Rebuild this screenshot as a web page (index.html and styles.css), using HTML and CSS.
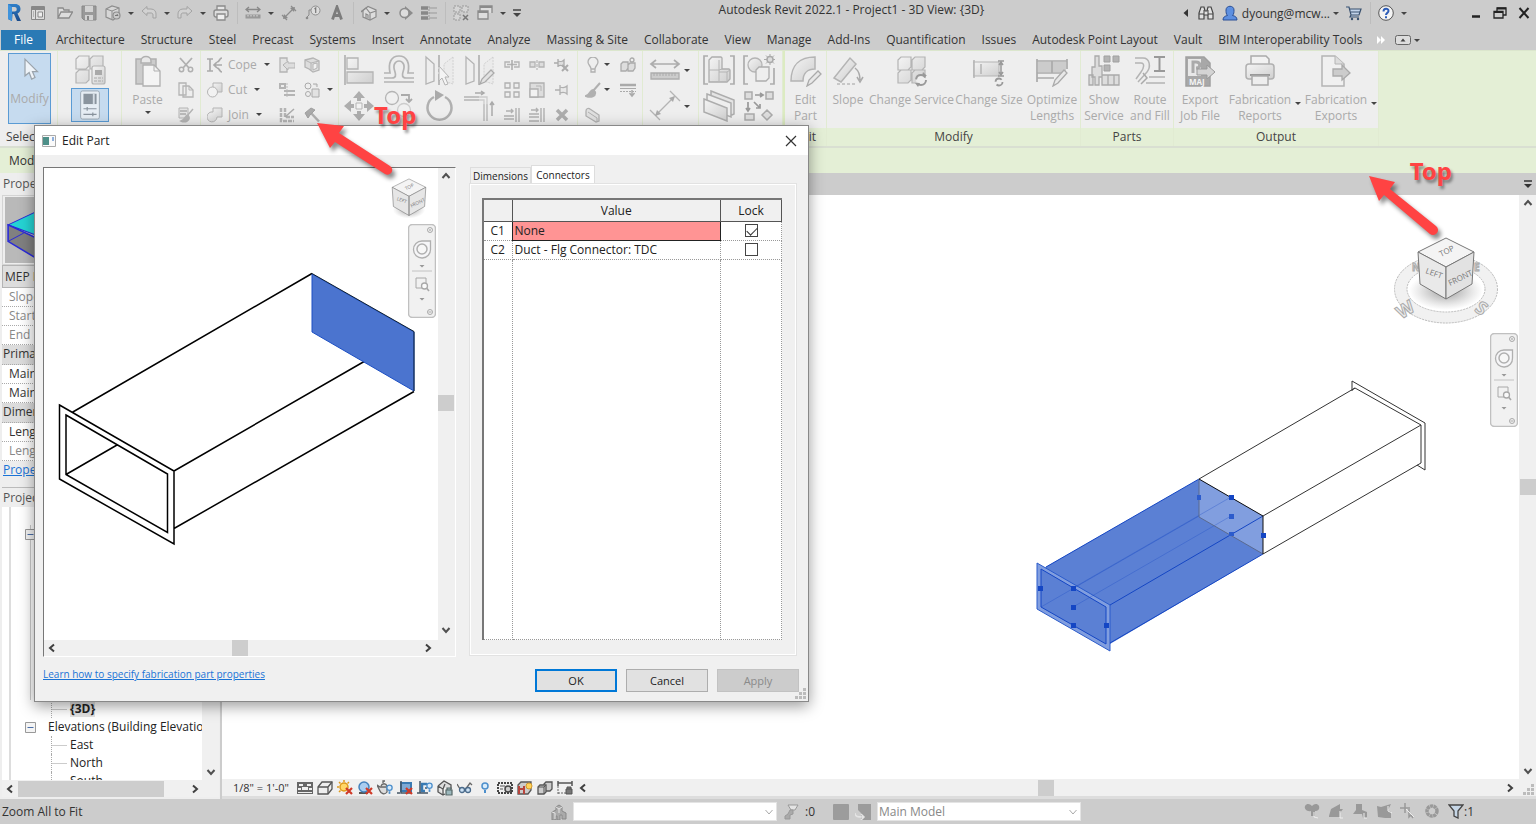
FILE: index.html
```html
<!DOCTYPE html>
<html lang="en">
<head>
    <meta charset="UTF-8">
    <title>Autodesk Revit 2022.1 - Project1 - 3D View: {3D}</title>
    <link rel="stylesheet" href="styles.css">
</head>
<body>
<svg class="defs" aria-hidden="true">
    <defs>
        <linearGradient id="grey" x1="0" y1="0" x2="1" y2="1"><stop offset="0" stop-color="#f4f4f4"/><stop offset="1" stop-color="#cfcfcf"/></linearGradient>
        <linearGradient id="logo" x1="0" y1="0" x2="0" y2="1"><stop offset="0" stop-color="#2f7fc9"/><stop offset="1" stop-color="#1a4a8a"/></linearGradient>
        <radialGradient id="cubeShadow"><stop offset="0" stop-color="#555" stop-opacity=".6"/><stop offset="1" stop-color="#888" stop-opacity="0"/></radialGradient>
        <symbol id="up" viewBox="0 0 16 16"><path d="M4.500 10 8 6l3.500 4" fill="none" stroke="#505050" stroke-width="2"/></symbol>
        <symbol id="down" viewBox="0 0 16 16"><path d="M4.500 6 8 10l3.500-4" fill="none" stroke="#505050" stroke-width="2"/></symbol>
        <symbol id="left" viewBox="0 0 16 16"><path d="M10 4.500 6 8l4 3.500" fill="none" stroke="#404040" stroke-width="2"/></symbol>
        <symbol id="right" viewBox="0 0 16 16"><path d="M6 4.500 10 8l-4 3.500" fill="none" stroke="#404040" stroke-width="2"/></symbol>
        <symbol id="grip" viewBox="0 0 12 12"><path d="M8 0h3v3H8zM4 4h3v3H4zM8 4h3v3H8zM0 8h3v3H0zM4 8h3v3H4zM8 8h3v3H8z" fill="#bcbcbc"/></symbol>
        <symbol id="redx" viewBox="0 0 8 8"><path d="M1 1l6 6M7 1 1 7" stroke="#cf3a28" stroke-width="2.200"/></symbol>
        <symbol id="bulb" viewBox="0 0 8 12"><circle cx="4" cy="4" r="3" fill="#d9ecfb" stroke="#4d8fcc" stroke-width="1.500"/><path d="M3 8v3h2V8" fill="#4d8fcc"/></symbol>
        <symbol id="navbar" viewBox="0 0 28 94">
            <rect x=".5" y=".5" width="27" height="93" rx="4" fill="#f1f1f1" stroke="#c0c0c0" stroke-width="1.500"/>
            <circle cx="22" cy="6" r="2.500" fill="none" stroke="#aaa"/><path d="M20.500 4.500l3 3M23.500 4.500l-3 3" stroke="#aaa" stroke-width=".6"/>
            <path d="M14 17h8.500v8a8.500 8.500 0 1 1-8.500-8z" fill="#f6f6f8" stroke="#b0b0b0" stroke-width="1.300"/><circle cx="14" cy="25" r="5" fill="#f7f7f7" stroke="#b0b0b0" stroke-width="1.500"/>
            <path d="M11.500 41h5L14 43.500zM11.500 74h5L14 76.500z" fill="#999"/><path d="M4 47h20" stroke="#c2c2c2"/>
            <path d="M14 64H8V54h10v6" fill="none" stroke="#a8a8a8"/><circle cx="16.500" cy="62" r="3" fill="#fafafa" stroke="#a8a8a8" stroke-width="1.300"/><path d="M18.500 64l2.500 3" stroke="#a8a8a8" stroke-width="1.600"/>
            <circle cx="22" cy="88" r="2.500" fill="none" stroke="#aaa"/><path d="M20.500 88h3" stroke="#aaa"/>
        </symbol>
    </defs>
</svg>

<div class="app">
    <header class="titlebar">
        <div class="qat">
            <button title="Revit"><svg viewBox="0 0 16 20" class="logo"><path fill="url(#logo)" fill-rule="evenodd" d="M2 1h7c4 0 5.500 2.500 5.500 5 0 2.300-1.200 3.800-3 4.600L15 18h-4l-3-7H6.500l-.5 7L2 16zM6 4v4.500h2.500c1.500 0 2.200-1 2.200-2.300S10 4 8.500 4z"/><path d="M2 1v15l4 2V4z" fill="#3f93dc"/></svg></button>
            <button class="qat-ui" title="User interface"><svg viewBox="0 0 16 16"><path d="M1.500 1.500h13v13h-13z" fill="#ddd" stroke="#888"/><path d="M2 3.500h12" stroke="#888" stroke-width="3"/><path d="M5.500 5v9M8 7h4.500v5H8z" fill="#eee" stroke="#888"/><path d="M3 7h1M3 9h1M3 11h1" stroke="#888"/></svg></button>
            <button title="Open"><svg viewBox="0 0 16 16"><path d="M1 13V3h5l1 2h5v2M1 13l3-6h11.500L12 13z" fill="#ddd" stroke="#8b8b8b" stroke-width="1.300"/></svg></button>
            <button title="Save"><svg viewBox="0 0 16 16"><path d="M1 1h14v14H3l-2-2z" fill="#999" stroke="#888"/><path d="M4 1h8v6H4zM4 10h8v5H4z" fill="#d2d2d2"/><path d="M6 11v4h2v-4z" fill="#888"/></svg></button>
            <button title="Synchronize"><svg viewBox="0 0 16 16"><path d="M1 4l6-3 7 2v8l-6 4-7-3z" fill="#d6d6d6" stroke="#8e8e8e" stroke-width="1.200"/><path d="M1 4l6 2 7-3M7 6v8" fill="none" stroke="#8e8e8e"/><circle cx="11.500" cy="10.500" r="3.500" fill="#c9c9c9" stroke="#8e8e8e" stroke-width="1.200"/><path d="M10 10.500h3l-1.200-1.500" fill="none" stroke="#777"/></svg></button>
            <i class="caret"></i>
            <button title="Undo"><svg viewBox="0 0 16 16"><path d="M1 6l5-4.500V4h4c3.500 0 5 2.500 5 5v4h-3v-3c0-1.500-1-2-2-2H6v2.500z" fill="#d2d2d2" stroke="#a3a3a3"/></svg></button>
            <i class="caret"></i>
            <button title="Redo"><svg viewBox="0 0 16 16"><path d="M15 6l-5-4.500V4H6C2.500 4 1 6.500 1 9v4h3v-3c0-1.500 1-2 2-2h4v2.500z" fill="#d2d2d2" stroke="#a3a3a3"/></svg></button>
            <i class="caret"></i>
            <button title="Print"><svg viewBox="0 0 16 16"><path d="M4 5V1h8v4" fill="#e6e6e6" stroke="#8b8b8b" stroke-width="1.300"/><rect x="1" y="5" width="14" height="7" rx="2" fill="#ddd" stroke="#8b8b8b" stroke-width="1.400"/><path d="M4 9h8v6H4z" fill="#eee" stroke="#8b8b8b" stroke-width="1.300"/></svg></button>
            <i class="sep"></i>
            <button title="Measure"><svg viewBox="0 0 16 16"><path d="M1 4.500h14M4 2L1 4.500 4 7M12 2l3 2.500L12 7" fill="none" stroke="#888" stroke-width="1.300"/><path d="M.5 9.500h15v4H.5z" fill="#999"/><path d="M3 10v1.500M6 10v1.500M9 10v1.500M12 10v1.500" stroke="#ddd"/></svg></button>
            <i class="caret"></i>
            <button title="Aligned dimension"><svg viewBox="0 0 16 16"><path d="M3 13L13 3M1 10l5 5M10 1l5 5" fill="none" stroke="#8b8b8b" stroke-width="1.200"/><path d="M2 14l1-5 4 4zM14 2l-1 5-4-4z" fill="#8b8b8b"/></svg></button>
            <button title="Tag"><svg viewBox="0 0 16 16"><path d="M1 13l3-3V5h4" fill="none" stroke="#8b8b8b"/><circle cx="2" cy="13" r="1.300" fill="#8b8b8b"/><circle cx="10.500" cy="5.500" r="4.500" fill="#ddd" stroke="#909090"/><path d="M9.500 4l1.200-1v5" fill="none" stroke="#777" stroke-width="1.200"/></svg></button>
            <button title="Text"><svg viewBox="0 0 16 16"><path d="M3.500 14.500L8 2l4.500 12.500M5 10.500h6" fill="none" stroke="#7c7c7c" stroke-width="2.800"/></svg></button>
            <i class="sep"></i>
            <button title="Default 3D view"><svg viewBox="0 0 16 16"><path d="M1 6l6-4.500L15 5v7l-6 3-7-3V6z" fill="#ddd" stroke="#8b8b8b" stroke-width="1.200"/><path d="M0 7l5-4 4 5 6-2M9 8v7M5 13V9l2 1v3.500" fill="none" stroke="#8b8b8b" stroke-width="1.200"/></svg></button>
            <i class="caret"></i>
            <button title="Section"><svg viewBox="0 0 16 16"><path d="M8 1l8 7-8 7z" fill="#8c8c8c"/><circle cx="7.500" cy="8" r="4.500" fill="#ddd" stroke="#8c8c8c" stroke-width="1.500"/></svg></button>
            <button title="Thin lines"><svg viewBox="0 0 16 16"><path d="M0 3h7M0 8h7M0 13h7" stroke="#888" stroke-width="3.500"/><path d="M8 3h8M8 8h8M8 13h8" stroke="#999"/><path d="M8 1v14" stroke="#999" stroke-dasharray="2 1"/></svg></button>
            <i class="sep"></i>
            <button title="Close inactive views"><svg viewBox="0 0 16 16"><path d="M1 1h6v6H1zM9 1h6v6H9zM1 9h6v6H1z" fill="#d5d5d5" stroke="#999" stroke-dasharray="2 1"/><path d="M10 10l5 5M15 10l-5 5" stroke="#777" stroke-width="1.500"/></svg></button>
            <button title="Switch windows"><svg viewBox="0 0 16 16"><path d="M3 7V1h12v7M1 6h10v8H1z" fill="#ddd" stroke="#8a8a8a" stroke-width="1.300"/><path d="M3 2h12M1 7h10" stroke="#8a8a8a" stroke-width="2"/></svg></button>
            <i class="caret"></i>
            <button class="qat-more" title="Customize"><svg viewBox="0 0 16 16"><path d="M4 5h8" stroke="#444" stroke-width="1.500"/><path d="M4 8h8l-4 4z" fill="#444"/></svg></button>
        </div>
        <div class="title">Autodesk Revit 2022.1 - Project1 - 3D View: {3D}</div>
        <div class="account">
            <button class="narrow" title="Collapse"><svg viewBox="0 0 16 16"><path d="M10 4v8L5.500 8z" fill="#333"/></svg></button>
            <button title="Search"><svg viewBox="0 0 16 16"><path d="M1 14V8l2-6h3l1 4h2l1-4h3l2 6v6h-5v-4H6v4z" fill="#e2e2e2" stroke="#444" stroke-width="1.200"/><path d="M1 9h5M10 9h5M6 5v5M10 5v5" stroke="#444"/></svg></button>
            <button title="Account"><svg viewBox="0 0 16 16"><path d="M1 15c0-3 2-4 4.500-4.500C4 9 4 7 4 5c0-5 8-5 8 0 0 2 0 4-1.500 5.500C13 11 15 12 15 15z" fill="#5d8fe0" stroke="#2a4f96"/></svg></button>
            <span class="user">dyoung@mcw...</span><i class="caret"></i>
            <button title="App store"><svg viewBox="0 0 16 16"><path d="M0 2h3l2 8h8l2-6H4M5 10l-1 2h9" fill="#c2d4ea" stroke="#38506e" stroke-width="1.200"/><path d="M5 7h9" stroke="#38506e"/><circle cx="6" cy="14" r="1.200" fill="#38506e"/><circle cx="12" cy="14" r="1.200" fill="#38506e"/></svg></button>
            <i class="sep"></i>
            <button title="Help"><svg viewBox="0 0 16 16"><circle cx="8" cy="8" r="7.300" fill="#f4f4f4" stroke="#555"/><path d="M5.500 6.500c0-3.500 5-3.500 5-.5 0 1.800-2.500 2-2.500 4M8 11.200v2" fill="none" stroke="#2c5cb8" stroke-width="2"/></svg></button>
            <i class="caret"></i>
            <button class="minimize" title="Minimize"><svg viewBox="0 0 16 16"><path d="M4 11.500h8" stroke="#222" stroke-width="2.500"/></svg></button>
            <button title="Restore"><svg viewBox="0 0 16 16"><path d="M5 6V3h9v7h-3M2 6.500h9V13H2z" fill="none" stroke="#222" stroke-width="1.300"/><path d="M5 3.500h9M2 7h9" stroke="#222" stroke-width="2"/></svg></button>
            <button title="Close"><svg viewBox="0 0 16 16"><path d="M3.500 3l9 10M12.500 3l-9 10" stroke="#222" stroke-width="2"/></svg></button>
        </div>
    </header>

    <nav class="tabs">
        <a class="file" href="#">File</a>
        <a href="#">Architecture</a><a href="#">Structure</a><a href="#">Steel</a><a href="#">Precast</a><a href="#">Systems</a><a href="#">Insert</a><a href="#">Annotate</a><a href="#">Analyze</a><a href="#">Massing &amp; Site</a><a href="#">Collaborate</a><a href="#">View</a><a href="#">Manage</a><a href="#">Add-Ins</a><a href="#">Quantification</a><a href="#">Issues</a><a href="#">Autodesk Point Layout</a><a href="#">Vault</a><a href="#">BIM Interoperability Tools</a>
        <svg class="tabs-more" viewBox="0 0 10 10"><path d="M1 1l4 4-4 4zM5 1l4 4-4 4z" fill="#fff"/></svg>
        <button class="tabs-state" title="Minimize ribbon"><svg viewBox="0 0 16 10"><rect x=".5" y=".5" width="15" height="9" rx="2" fill="#ddd" stroke="#666"/><path d="M5.500 6.500h5L8 3.500z" fill="#444"/></svg></button>
        <i class="caret"></i>
    </nav>

    <div class="ribbon">
        <section class="panel p-select">
            <div class="panel-body">
                <button class="modify-btn"><svg viewBox="0 0 24 30"><path d="M6 2v20l5-4 3 8 4-2-3-7h6z" fill="#eef3f8" stroke="#9aa3ab" stroke-width="1.500"/></svg>Modify</button>
            </div>
            <h2>Select ▾</h2>
        </section>
        <section class="panel p-props">
            <div class="panel-body duo">
                <button title="Type properties"><svg viewBox="0 0 32 32"><g fill="url(#grey)" stroke="#b4b4b4" stroke-width="1.200"><path d="M2 5l3-3h10v10l-3 3H2zM16 5l3-3h10v10l-3 3H16zM2 19l3-3h10v10l-3 3H2z"/><rect x="18" y="12" width="13" height="18" rx="2"/></g><path d="M21 16h7v5h-7z" fill="#a9a9a9"/><path d="M20 24h9M20 27h9" stroke="#a9a9a9" stroke-dasharray="3 1"/></svg></button>
                <button class="props-btn" title="Properties"><svg viewBox="0 0 32 32"><rect x="6" y="1" width="20" height="30" rx="2" fill="#e6edf4" stroke="#9aa6b2"/><path d="M9 4h14v11H9z" fill="#8a949e"/><path d="M20 4v11" stroke="#d5dde5" stroke-width="2"/><path d="M9 20h14M9 26h14M13 18v4M19 24v4" stroke="#8a949e" stroke-width="1.300"/></svg></button>
            </div>
            <h2></h2>
        </section>
        <section class="panel p-clip">
            <div class="panel-body">
                <button class="big"><svg viewBox="0 0 32 32"><path d="M4 4h20v25H4z" fill="#ccc" stroke="#b0b0b0" stroke-width="1.500"/><path d="M9 6c0-6 10-6 10 0v2H9z" fill="#e8e8e8" stroke="#b0b0b0" stroke-width="1.500"/><path d="M11 10h11l6 6v15H11z" fill="#f4f4f4" stroke="#b0b0b0" stroke-width="1.300"/><path d="M22 10v6h6" fill="none" stroke="#b0b0b0"/></svg><span>Paste</span><i class="caret"></i></button>
                <div class="trio">
                    <button title="Cut"><svg viewBox="0 0 16 16"><path d="M2 1l9 10M14 1L5 11" stroke="#b0b0b0" stroke-width="1.800"/><circle cx="3.500" cy="12.500" r="2.200" fill="none" stroke="#b0b0b0" stroke-width="1.500"/><circle cx="12.500" cy="12.500" r="2.200" fill="none" stroke="#b0b0b0" stroke-width="1.500"/></svg></button>
                    <button title="Copy"><svg viewBox="0 0 16 16"><path d="M1 1h7v12H1zM5 4h6l4 4v7H5z" fill="#eee" stroke="#b4b4b4" stroke-width="1.300"/><path d="M11 4v4h4" fill="none" stroke="#b4b4b4"/></svg></button>
                    <button title="Match type"><svg viewBox="0 0 16 16"><path d="M1 1h9v10H1z" fill="#e4e4e4" stroke="#b4b4b4"/><path d="M2 4h7M2 7h6" stroke="#aaa" stroke-width="1.500"/><path d="M15 2L9 9M10 8c-3 0-2 4-7 6 4 2 9 0 8-4z" fill="#b4b4b4" stroke="#b4b4b4" stroke-width="1.500"/></svg></button>
                </div>
            </div>
            <h2></h2>
        </section>
        <section class="panel p-geom">
            <div class="panel-body">
                <div class="trio labelled">
                    <button><svg viewBox="0 0 16 16"><path d="M0 2h6M3 2v12M0 14h6M15 1c-3 0-2 4-5 4M15 15c-3 0-2-4-5-4M15 8H8M10 5L7 8l3 3" fill="none" stroke="#aaa" stroke-width="1.700"/></svg>Cope<i class="caret"></i></button>
                    <button><svg viewBox="0 0 16 16"><path d="M6 1h9v9H6z" fill="url(#grey)" stroke="#b4b4b4"/><circle cx="5.500" cy="10" r="5" fill="#f2f2f2" stroke="#b4b4b4"/></svg>Cut<i class="caret"></i></button>
                    <button><svg viewBox="0 0 16 16"><path d="M6 1h9v9h-5a5 5 0 1 1-4-5z" fill="url(#grey)" stroke="#b4b4b4"/></svg>Join<i class="caret"></i></button>
                </div>
                <div class="trio">
                    <button title="Join ends"><svg viewBox="0 0 16 16"><path d="M8 4V1H1v14h7v-3" fill="#e4e4e4" stroke="#b4b4b4" stroke-width="1.300"/><path d="M4 8l5-4v2h7v5H9v2z" fill="#ddd" stroke="#b4b4b4"/></svg></button>
                    <button title="Beam joins"><svg viewBox="0 0 16 16"><path d="M1 2h5v4H1zM5 9h11M5 13h11" fill="none" stroke="#b4b4b4" stroke-width="2"/><path d="M8 1v14" stroke="#bbb" stroke-dasharray="2 1"/></svg></button>
                    <button title="Wall joins"><svg viewBox="0 0 16 16"><path d="M2 1v13h13M6 1v9h9" fill="none" stroke="#b4b4b4" stroke-width="2.500" stroke-dasharray="4 1"/><path d="M6 10l9-8" stroke="#aaa" stroke-width="1.500"/></svg></button>
                </div>
                <div class="trio">
                    <button title="Split face"><svg viewBox="0 0 16 16"><path d="M1 3l8-2 6 3v9l-6 2-4-3-4-2z" fill="#ddd" stroke="#b4b4b4" stroke-width="1.300"/><path d="M1 3l6 3 8-2M7 6v7" fill="none" stroke="#b4b4b4"/><path d="M9 7l4-1v5l-4 2z" fill="#f2f2f2" stroke="#b4b4b4"/></svg></button>
                    <button title="Paint"><svg viewBox="0 0 16 16"><circle cx="4" cy="4" r="3" fill="#eee" stroke="#aaa"/><circle cx="4" cy="12" r="2.500" fill="#eee" stroke="#aaa"/><path d="M8 7h7v8H8zM9 2h4v3" fill="#e2e2e2" stroke="#aaa"/></svg></button>
                    <button title="Demolish"><svg viewBox="0 0 16 16"><path d="M7 6l8 8.500" stroke="#b0b0b0" stroke-width="2.500"/><path d="M1 6l6-5 4 2-5 5-2 3z" fill="#aaa" stroke="#a0a0a0"/></svg></button>
                </div>
                <i class="caret"></i>
            </div>
            <h2></h2>
        </section>
        <section class="panel p-mod">
            <div class="panel-body">
                <div class="duo-grid">
                    <button title="Align"><svg viewBox="0 0 32 32"><path d="M2 1v30" stroke="#aaa" stroke-width="1.500"/><path d="M4 4h11v11H4zM4 18h26v11H4z" fill="url(#grey)" stroke="#b4b4b4" stroke-width="1.300"/></svg></button>
                    <button title="Offset"><svg viewBox="0 0 32 32"><path d="M1 28h30M1 24h8c4 0 4-3 3-6-3-8 1-11 4-11s7 3 4 11c-1 3-1 6 3 6h8M1 19h6C5 9 8 2 16 2s11 7 9 17h6" fill="none" stroke="#b4b4b4" stroke-width="1.700"/></svg></button>
                    <button title="Mirror pick axis"><svg viewBox="0 0 32 32"><path d="M3 3l8 7v17l-8 3z" fill="#eee" stroke="#b4b4b4" stroke-width="1.300"/><path d="M30 3l-9 7v17l9 3z" fill="#ebebeb" stroke="#d0d0d0" stroke-dasharray="2 1"/><path d="M16 1v30" stroke="#aaa" stroke-width="1.500" stroke-dasharray="12 2 3 2"/><path d="M16 12v15l3-3 3 7 3-1-3-7h4z" fill="#f4f4f4" stroke="#b4b4b4"/></svg></button>
                    <button title="Mirror draw axis"><svg viewBox="0 0 32 32"><path d="M3 3l8 7v17l-8 3z" fill="#eee" stroke="#b4b4b4" stroke-width="1.300"/><path d="M30 3l-9 7v17l9 3z" fill="#ebebeb" stroke="#d0d0d0" stroke-dasharray="2 1"/><path d="M16 1v30" stroke="#aaa" stroke-width="1.500"/><path d="M17 30l2-5 9-9 3 3-9 9z" fill="#e2e2e2" stroke="#aaa" stroke-width="1.300"/></svg></button>
                    <button title="Move"><svg viewBox="0 0 32 32"><path d="M16 1l6 7h-4v3h-4V8h-4zM16 31l6-7h-4v-3h-4v3h-4zM1 16l7-6v4h3v4H8v4zM31 16l-7-6v4h-3v4h3v4z" fill="#adadad"/><path d="M13 13h6v6h-6z" fill="#f2f2f2" stroke="#b4b4b4"/></svg></button>
                    <button title="Copy"><svg viewBox="0 0 32 32"><circle cx="9" cy="8" r="6.500" fill="#f0f0f0" stroke="#b4b4b4" stroke-width="1.300"/><circle cx="21" cy="20" r="6.500" fill="#f0f0f0" stroke="#ccc" stroke-width="1.300"/><path d="M18 5h8v6M23 9l3 3 3-3" fill="none" stroke="#aaa" stroke-width="1.800"/></svg></button>
                    <button title="Rotate"><svg viewBox="0 0 32 32"><path d="M22 7a12 12 0 1 1-11 0" fill="none" stroke="#b0b0b0" stroke-width="2.500"/><path d="M12 0l9 5-9 6z" fill="#aaa"/></svg></button>
                    <button title="Trim"><svg viewBox="0 0 32 32"><path d="M1 10h15M1 7h15M21 14v17M24 14v17" stroke="#b4b4b4" stroke-width="1.300"/><path d="M16 7h8v8M16 10h5v5" fill="none" stroke="#ccc" stroke-width="1.300"/><path d="M12 3h9M18 1l3 2-3 2M29 26V12M27 15l2-3 2 3" fill="none" stroke="#aaa" stroke-width="1.500"/></svg></button>
                </div>
                <div class="trio-grid">
                    <button title="Split"><svg viewBox="0 0 16 16"><path d="M6 5H1v5h5M10 5h5v5h-5M3 7.500h10" fill="none" stroke="#b4b4b4" stroke-width="1.400"/><path d="M8 3v10" stroke="#aaa" stroke-width="1.500"/></svg></button>
                    <button title="Split with gap"><svg viewBox="0 0 16 16"><path d="M1 5h5v5H1zM10 5h5v5h-5z" fill="#ddd" stroke="#b4b4b4" stroke-width="1.300"/><path d="M8 3v10" stroke="#aaa" stroke-dasharray="3 1"/></svg></button>
                    <button title="Unpin"><svg viewBox="0 0 16 16"><path d="M0 6h4M4 2v8M4 4c3 1 4 1 6-1v7c-2-2-4-2-6-1" fill="#ddd" stroke="#aaa" stroke-width="1.300"/><path d="M8 8l6 6M14 8l-6 6" stroke="#aaa" stroke-width="2"/></svg></button>
                    <button title="Array"><svg viewBox="0 0 16 16"><path d="M1 1h5v5H1zM10 1h5v5h-5zM1 10h5v5H1zM10 10h5v5h-5z" fill="#eee" stroke="#b0b0b0" stroke-width="1.300"/></svg></button>
                    <button title="Scale"><svg viewBox="0 0 16 16"><path d="M1 1h14v14H1z" fill="#ddd" stroke="#b0b0b0" stroke-width="1.300"/><path d="M1 7h8v8H1z" fill="#f2f2f2" stroke="#b0b0b0" stroke-width="1.300"/><path d="M7 4h5v5" fill="none" stroke="#b4b4b4"/></svg></button>
                    <button title="Pin"><svg viewBox="0 0 16 16"><path d="M1 8h5M6 3v10M6 5c3 1 5 1 7-1v8c-2-2-4-2-7-1" fill="#e8e8e8" stroke="#b0b0b0" stroke-width="1.300"/></svg></button>
                    <button title="Trim single"><svg viewBox="0 0 16 16"><path d="M2 4h7M7 2l2 2-2 2M0 9h10M0 12h10M12 1v14M15 1v14" fill="none" stroke="#b0b0b0" stroke-width="1.400"/></svg></button>
                    <button title="Trim multiple"><svg viewBox="0 0 16 16"><path d="M2 3h7M7 1l2 2-2 2M0 7h10M0 10h10M0 14h10M12 1v14M15 1v14" fill="none" stroke="#b0b0b0" stroke-width="1.400"/></svg></button>
                    <button title="Delete"><svg viewBox="0 0 16 16"><path d="M3 3l10 10M13 3L3 13" stroke="#adadad" stroke-width="3.500"/></svg></button>
                </div>
            </div>
            <h2></h2>
        </section>
        <section class="panel p-view">
            <div class="panel-body">
                <div class="trio with-caret">
                    <button><svg viewBox="0 0 16 16"><path d="M6 12C6 9 3 8 3 5a5 5 0 0 1 10 0c0 3-3 4-3 7v3H6zM6 12h4" fill="#eee" stroke="#b0b0b0" stroke-width="1.300"/></svg><i class="caret"></i></button>
                    <button><svg viewBox="0 0 16 16"><path d="M15 1L8 9M8 8c-3 0-2 4-7 6 5 2 10 0 9-4z" fill="#b0b0b0" stroke="#b0b0b0" stroke-width="2"/></svg><i class="caret"></i></button>
                    <button><svg viewBox="0 0 16 16"><path d="M1 4c0-3 3-3 4-2l9 6v6l-3 1-10-6z" fill="#e0e0e0" stroke="#b0b0b0" stroke-width="1.300"/><path d="M3 5l9 6v4" fill="none" stroke="#b0b0b0"/></svg></button>
                </div>
                <div class="trio">
                    <button title="Displace"><svg viewBox="0 0 16 16"><path d="M1 7l2-2h5v6l-2 3H1zM8 8l2-2h5v5l-2 3H8z" fill="#ddd" stroke="#aaa" stroke-width="1.300"/><circle cx="12" cy="3" r="2" fill="none" stroke="#aaa" stroke-width="1.300"/></svg></button>
                    <button title="Linework"><svg viewBox="0 0 16 16"><path d="M0 3h16" stroke="#aaa" stroke-width="2.500"/><path d="M0 6.500h16" stroke="#aaa"/><path d="M0 9.500h16" stroke="#aaa" stroke-dasharray="2 1"/><path d="M12 8v6M9.500 11l2.500 3 2.500-3" fill="none" stroke="#aaa" stroke-width="1.500"/></svg></button>
                </div>
            </div>
            <h2></h2>
        </section>
        <section class="panel p-meas">
            <div class="panel-body duo">
                <button><svg viewBox="0 0 32 32"><path d="M2 10h28M7 6l-5 4 5 4M25 6l5 4-5 4" fill="none" stroke="#adadad" stroke-width="1.700"/><path d="M2 19h28v6H2z" fill="#ccc" stroke="#adadad" stroke-width="1.300"/><path d="M5 19v3M8 19v3M11 19v3M14 19v3M17 19v3M20 19v3M23 19v3M26 19v3" stroke="#aaa"/></svg><i class="caret"></i></button>
                <button><svg viewBox="0 0 32 32"><path d="M7 25L25 7M1 20l10 10M21 1l10 10" fill="none" stroke="#b4b4b4" stroke-width="1.300"/><path d="M6 26l2-6 4 4zM26 6l-2 6-4-4z" fill="#aaa"/></svg><i class="caret"></i></button>
            </div>
            <h2></h2>
        </section>
        <section class="panel p-create">
            <div class="panel-body">
                <div class="duo-grid">
                    <button title="Create assembly"><svg viewBox="0 0 32 32"><path d="M5 2H1v28h4M27 2h4v28h-4" fill="none" stroke="#adadad" stroke-width="1.700"/><path d="M6 6l3-3h9l1 1v11h7l1 1v9l-3 3H6z" fill="url(#grey)" stroke="#adadad" stroke-width="1.300"/><path d="M6 16h10l3-1M16 6v21M16 18h8v9M24 18l3-2" fill="none" stroke="#b4b4b4"/></svg></button>
                    <button title="Create group"><svg viewBox="0 0 32 32"><path d="M5 2H1v28h4M27 30h4V14" fill="none" stroke="#adadad" stroke-width="1.700"/><circle cx="12" cy="11" r="7" fill="url(#grey)" stroke="#b4b4b4" stroke-width="1.300"/><path d="M13 16l3-3h10v11l-3 3H13z" fill="#eee" stroke="#adadad" stroke-width="1.300"/><path d="M27 0v11M21 5.500h11M23 1.500l8 8M31 1.500l-8 8" stroke="#aaa"/><circle cx="27" cy="5.500" r="3" fill="#ddd" stroke="#aaa" stroke-width="1.500"/></svg></button>
                    <button title="Create parts"><svg viewBox="0 0 32 32"><path d="M8 1l23 9v14l-2 1-21-9z" fill="#e4e4e4" stroke="#adadad" stroke-width="1.500"/><path d="M4 4l24 9v14l-24-9z" fill="#eee" stroke="#adadad" stroke-width="1.500"/><path d="M1 9l23 9v13L1 22z" fill="url(#grey)" stroke="#adadad" stroke-width="1.500"/></svg></button>
                    <button title="Create similar"><svg viewBox="0 0 32 32"><path d="M2 2h7v7H2zM23 2h7v7h-7zM2 24h9v6H2zM24 20l5 5-5 5-5-5z" fill="#ddd" stroke="#aaa" stroke-width="1.500"/><path d="M12 5h8M17 3l3 2-3 2M5 12v9M3 18l2 3 2-3M11 12l6 6M17 14v4h-4" fill="none" stroke="#999" stroke-width="1.700"/></svg></button>
                </div>
            </div>
            <h2></h2>
        </section>
        <section class="panel green p-edit">
            <div class="panel-body">
                <button class="big"><svg viewBox="0 0 32 32"><path d="M1 26C1 10 10 2 25 2v12c-7 0-12 4-12 12z" fill="url(#grey)" stroke="#b4b4b4" stroke-width="1.500"/><path d="M17 31l2-6 9-9 3 3-9 9z" fill="#e8e8e8" stroke="#aaa" stroke-width="1.300"/></svg><span>Edit<br>Part</span></button>
            </div>
            <h2>Edit</h2>
        </section>
        <section class="panel green p-modify">
            <div class="panel-body">
                <button class="big"><svg viewBox="0 0 32 32"><path d="M2 23L18 3l6 6L9 27z" fill="url(#grey)" stroke="#b4b4b4" stroke-width="1.500"/><path d="M5 29h20" stroke="#bbb" stroke-dasharray="3 2" stroke-width="1.500"/><path d="M23 13c4 3 5 7 5 12M25 22l3 5 3-5" fill="none" stroke="#aaa" stroke-width="1.500"/></svg><span>Slope</span></button>
                <button class="big"><svg viewBox="0 0 32 32"><path d="M2 5l3-3h10v10l-3 3H2zM16 5l3-3h10v10l-3 3H16zM2 18l3-3h10v10l-3 3H2zM16 18l3-3h10v10l-3 3H16z" fill="url(#grey)" stroke="#b4b4b4" stroke-width="1.200"/><circle cx="25" cy="25" r="5" fill="#eee" stroke="#999" stroke-width="2" stroke-dasharray="12 4"/><path d="M27 17l4 4h-5zM22 32l-3-4h5z" fill="#999"/></svg><span>Change Service</span></button>
                <button class="big"><svg viewBox="0 0 32 32"><path d="M0 7h26v14H0z" fill="url(#grey)" stroke="#b4b4b4"/><path d="M8 9v10M1 5v18" stroke="#b4b4b4" stroke-width="1.500"/><path d="M25 6h6M25 21h6M28 7v13M26 10l2-3 2 3M26 17l2 3 2-3" fill="none" stroke="#999" stroke-width="1.500"/><circle cx="26" cy="27" r="3.500" fill="#eee" stroke="#999" stroke-width="1.800" stroke-dasharray="8 3"/></svg><span>Change Size</span></button>
                <button class="big"><svg viewBox="0 0 32 32"><path d="M2 7h28v10H2z" fill="#ccc"/><path d="M1 6h30M1 18h30M1 23h17M1 4v23M31 4v10M16 6v12" stroke="#aaa" stroke-width="1.700"/><path d="M17 31l2-6 9-10 3 3-9 10z" fill="#e8e8e8" stroke="#aaa" stroke-width="1.300"/></svg><span>Optimize Lengths</span></button>
            </div>
            <h2>Modify</h2>
        </section>
        <section class="panel green p-parts">
            <div class="panel-body">
                <button class="big"><svg viewBox="0 0 32 32"><path d="M16 1h6v6h-6zM25 1h6v6h-6zM16 10h6v6h-6z" fill="#b4b4b4" stroke="#a0a0a0"/><path d="M7 1h4v10h3v11h-3v8H7v-8H4V12h3zM1 20h4v10H1zM14 20h17v10H14zM20 20v10M26 20v10" fill="#ddd" stroke="#aaa" stroke-width="1.300"/></svg><span>Show Service</span></button>
                <button class="big"><svg viewBox="0 0 32 32"><path d="M1 3h8c7 0 8 9 4 14L4 27M1 8h6c4 0 3 5 0 9l-5 7M15 22h16M12 28h19" fill="none" stroke="#b4b4b4" stroke-width="1.500"/><path d="M20 2h11M20 16h11M25.500 2v14" stroke="#999" stroke-width="2"/><path d="M9 18l4 5-6 6" fill="none" stroke="#aaa" stroke-width="1.500"/></svg><span>Route and Fill</span></button>
            </div>
            <h2>Parts</h2>
        </section>
        <section class="panel green p-output">
            <div class="panel-body">
                <button class="big"><svg viewBox="0 0 32 32"><path d="M2 2h18l6 6v23H2z" fill="#a8a8a8" stroke="#a0a0a0" stroke-width="1.500"/><path d="M4 4h13v17H4z" fill="#e8e8e8"/><path d="M9 18V7h3c5 0 5 6 0 6" fill="none" stroke="#aaa" stroke-width="3"/><path d="M13 14h10v-4l8 7-8 7v-4H13z" fill="#d4d4d4" stroke="#999"/><text class="job" x="5" y="30">MAJ</text></svg><span>Export Job File</span></button>
                <button class="big"><svg viewBox="0 0 32 32"><path d="M7 9V1h15l3 3v5" fill="#f2f2f2" stroke="#aaa" stroke-width="1.500"/><rect x="2" y="9" width="28" height="15" rx="3" fill="url(#grey)" stroke="#b0b0b0" stroke-width="1.500"/><path d="M6 20h20" stroke="#999" stroke-width="2"/><path d="M8 21h16v9H8z" fill="#eee" stroke="#aaa" stroke-width="1.500"/></svg><span>Fabrication Reports</span></button><i class="caret"></i>
                <button class="big"><svg viewBox="0 0 32 32"><path d="M2 1h13l9 8v22H2z" fill="#f0f0f0" stroke="#b4b4b4" stroke-width="1.500"/><path d="M15 1v8h9" fill="#ddd" stroke="#b4b4b4"/><path d="M13 14h9v-4l8 8-8 7v-4h-9z" fill="#ccc" stroke="#aaa" stroke-width="1.300"/></svg><span>Fabrication Exports</span></button><i class="caret"></i>
            </div>
            <h2>Output</h2>
        </section>
    </div>
    <div class="options">Modify | MEP Fabrication Ductwork</div>

    <main class="workspace">
        <aside class="palette">
            <h3>Properties</h3>
            <div class="type">
                <svg viewBox="0 0 64 64"><rect width="64" height="64" fill="#b9b9b9"/><path d="M3 27L50 5l12 8-29 25z" fill="#25d4d4" stroke="#2a2ad8"/><path d="M3 27l30 14v20L3 43z" fill="#808080" stroke="#2a2ad8" stroke-width="1.500"/><path d="M3 43l15-8" stroke="#2a2ad8"/></svg>
            </div>
            <div class="category">MEP Fabrication Ductwork</div>
            <ul class="props">
                <li class="dim">Slope</li>
                <li class="dim">Start Middle Elevation</li>
                <li class="dim">End Middle Elevation</li>
                <li class="group">Primary End</li>
                <li>Main Primary Width</li>
                <li>Main Primary Depth</li>
                <li class="group">Dimensions</li>
                <li>Length</li>
                <li class="dim">Length Option</li>
            </ul>
            <a class="help" href="#">Properties help</a>
            <h3 class="browser-title">Project Browser - Project1</h3>
            <div class="browser">
                <div class="tree">
                    <div class="branch views"><svg class="box" viewBox="0 0 11 11"><path d="M.5.500h10v10H.5z" fill="#f4f4f4" stroke="#999"/><path d="M2.500 5.500h6" stroke="#4a6ea8"/></svg><span>3D Views</span></div>
                    <div class="leaf"><b>{3D}</b></div>
                    <div class="branch"><svg class="box" viewBox="0 0 11 11"><path d="M.5.500h10v10H.5z" fill="#f4f4f4" stroke="#999"/><path d="M2.500 5.500h6" stroke="#4a6ea8"/></svg><span>Elevations (Building Elevatio</span></div>
                    <div class="leaf">East</div>
                    <div class="leaf">North</div>
                    <div class="leaf">South</div>
                </div>
                <div class="vbar"><svg><use href="#down"/></svg></div>
            </div>
            <div class="hbar"><svg><use href="#left"/></svg><i class="thumb"></i><svg><use href="#right"/></svg></div>
        </aside>

        <section class="view">
            <div class="view-tabs"><svg viewBox="0 0 16 16"><path d="M4 5h8" stroke="#333" stroke-width="1.500"/><path d="M4 8h8l-4 4z" fill="#333"/></svg></div>
            <div class="view-main">
                <div class="canvas">
                    <svg class="model" viewBox="0 0 420 300">
                        <g fill="none" stroke="#333">
                            <path d="M332 21v-10l73 42v47l-8-5M335 18l66 37v38M179 109L335 18M243 146L401 55M243 184L401 93M335 18l-3 2"/>
                        </g>
                        <path d="M179 109l64 37v38L90 274V235L24 198z" fill="#5b80d4"/>
                        <path d="M24 198l66 36v40l-68-38v-38z" fill="#5b80d4"/>
                        <path d="M179 109l64 37v38l-64-37z" fill="#819edf"/>
                        <path d="M17 193l73 42v46l-73-42z" fill="#819edf" stroke="#2a5bcb"/>
                        <path d="M21 199l65 38v37l-65-37z" fill="#5b80d4" stroke="#1446c4"/>
                        <g fill="none" stroke="#1446c4">
                            <path d="M26 197L179 109M90 235l153-89M90 273l153-89" />
                            <path d="M21 237l158-91M53 218l158-91M53 237l158-91" opacity=".3"/>
                        </g>
                        <path d="M179 109v38l64 37" fill="none" stroke="#5a6a90"/>
                        <path d="M179 109l64 37v38" fill="none" stroke="#111"/>
                        <path d="M18 216h5v5h-5zM51 216h5v5h-5zM51 235h5v5h-5zM51 253h5v5h-5zM84 253h5v5h-5zM209 125h5v5h-5zM241 163h5v5h-5z" fill="#1446c4"/>
                        <path d="M177 125h4v5h-4zM209 144h5v5h-5zM209 162h5v4h-5z" fill="#2c5bcc"/>
                    </svg>
                    <svg class="cube" viewBox="0 0 110 92">
                        <ellipse cx="56" cy="54" rx="45" ry="28" fill="none" stroke="#f1f1f1" stroke-width="13"/>
                        <ellipse cx="56" cy="54" rx="51.500" ry="34" fill="none" stroke="#bbb" stroke-dasharray="2 1"/>
                        <ellipse cx="56" cy="54" rx="39" ry="23" fill="#fff" stroke="#bbb" stroke-dasharray="2 1"/>
                        <ellipse cx="56" cy="56" rx="37" ry="19" fill="url(#cubeShadow)"/>
                        <g class="compass"><text x="7" y="80" transform="rotate(-32 17 75)">W</text><text x="86" y="80" transform="rotate(35 92 74)">S</text><text class="far" x="22" y="36">N</text><text class="far" x="84" y="36">E</text></g>
                        <path d="M28 17l28-14 28 14-28 15z" fill="#f4f4f4" stroke="#777"/>
                        <path d="M28 17l28 15v32L30 49z" fill="#e9e9e9" stroke="#777"/>
                        <path d="M84 17L56 32v32l26-15z" fill="#e2e2e2" stroke="#777"/>
                        <g class="faces"><text x="35" y="38" transform="rotate(20 35 38)">LEFT</text><text x="60" y="51" transform="rotate(-26 60 51)">FRONT</text><text x="51" y="22" transform="rotate(-26 51 22)">TOP</text></g>
                    </svg>
                    <svg class="nav"><use href="#navbar"/></svg>
                </div>
                <div class="vbar"><svg><use href="#up"/></svg><i class="thumb"></i><svg><use href="#down"/></svg></div>
            </div>
            <div class="view-controls">
                <span class="scale">1/8" = 1'-0"</span>
                <button title="Detail level"><svg viewBox="0 0 16 16"><path d="M0 2h16v12H0z" fill="#666"/><path d="M2 4h4v2H2zM10 4h4v2h-4zM5 7h6v3H5zM1 12h14v1H1zM1 8h3v2H1zM12 8h3v2h-3z" fill="#eee"/></svg></button>
                <button title="Visual style"><svg viewBox="0 0 16 16"><path d="M1 7l4-5h10v7l-4 5H1z" fill="#eee" stroke="#555" stroke-width="1.300"/><path d="M1 7h10l4-5M11 7v7" fill="none" stroke="#555" stroke-width="1.300"/></svg></button>
                <button title="Sun path"><svg viewBox="0 0 16 16"><circle cx="7" cy="7" r="4" fill="#ffd768" stroke="#e09a1c" stroke-width="1.500"/><path d="M7 0v2M0 7h2M2 2l1.500 1.500M12 2l-1.500 1.500M2 12l1.500-1.500" stroke="#e09a1c" stroke-width="1.500"/><use href="#redx" x="8" y="7" width="8" height="8"/></svg></button>
                <button title="Shadows"><svg viewBox="0 0 16 16"><path d="M2 13h9" stroke="#555" stroke-width="2"/><circle cx="7" cy="7" r="5" fill="#a9cdf0" stroke="#4482bd" stroke-width="1.500"/><use href="#redx" x="8" y="7" width="8" height="8"/></svg></button>
                <button title="Rendering"><svg viewBox="0 0 16 16"><path d="M0 5l3 2h7v5c-2 3-6 2-7-1zM4 6c1-3 5-3 6 0M6 3V1h2M11 6h3" fill="#ddd" stroke="#666" stroke-width="1.300"/><use href="#bulb" x="9" y="4" width="7" height="11"/></svg></button>
                <button title="Crop view"><svg viewBox="0 0 16 16"><path d="M4 3h10v8H4z" fill="#7da9d4" stroke="#397ab2" stroke-width="2"/><path d="M4 1v12h11M0 13h3" fill="none" stroke="#456" stroke-width="1.500"/><use href="#redx" x="8" y="7" width="8" height="8"/></svg></button>
                <button title="Crop region"><svg viewBox="0 0 16 16"><path d="M10 4H5v7h3" fill="none" stroke="#397ab2" stroke-width="2.500"/><path d="M3 1v12h8M0 13h3M8 8h2" fill="none" stroke="#456" stroke-width="1.500"/><use href="#bulb" x="9" y="2" width="7" height="11"/></svg></button>
                <button title="Lock view"><svg viewBox="0 0 16 16"><path d="M1 6l6-5 7 4v4M1 6v6l5 3 2-1M1 6l5 3v6M6 9l2-5" fill="#ddd" stroke="#555" stroke-width="1.300"/><path d="M9 10h6v5H9zM10 10V8h4v2" fill="#9cb8bd" stroke="#566" stroke-width="1.200"/></svg></button>
                <button title="Hide/isolate"><svg viewBox="0 0 16 16"><path d="M0 4l3 5M8 10l5-7 2 2" fill="none" stroke="#666" stroke-width="1.300"/><circle cx="5" cy="10" r="2.500" fill="#cde2f5" stroke="#4a6a8a" stroke-width="1.300"/><circle cx="11" cy="10" r="2.500" fill="#cde2f5" stroke="#4a6a8a" stroke-width="1.300"/></svg></button>
                <button title="Reveal hidden"><svg viewBox="0 0 16 16"><use href="#bulb" x="4" y="2" width="8" height="12"/></svg></button>
                <button title="View properties"><svg viewBox="0 0 16 16"><path d="M1 3h14v10H1z" fill="#eee" stroke="#444" stroke-width="2" stroke-dasharray="2 1"/><circle cx="11" cy="9" r="3" fill="#ccc" stroke="#444" stroke-width="1.500"/><path d="M3 6h5M3 9h3" stroke="#555"/></svg></button>
                <button title="Analytical model"><svg viewBox="0 0 16 16"><path d="M1 5l3-3h10v8l-3 4H1z" fill="#ccc" stroke="#555" stroke-width="1.300"/><path d="M2 6v8M7 6v8M2 9h5" stroke="#b8443c" stroke-width="2"/><circle cx="12" cy="6" r="3" fill="#ffd45c" stroke="#d49a2c"/></svg></button>
                <button title="Displacement sets"><svg viewBox="0 0 16 16"><path d="M7 4l2-2h6v7l-2 2H7z" fill="#ccc" stroke="#555" stroke-width="1.300"/><path d="M1 7l2-2h6v7l-2 2H1z" fill="#ccc" stroke="#555" stroke-width="1.300"/><path d="M1 7h6v7M7 7l2-2" fill="none" stroke="#555"/></svg></button>
                <button title="Constraints"><svg viewBox="0 0 16 16"><path d="M1 3h14M1 1v5M15 1v5" stroke="#555" stroke-width="1.500"/><path d="M1 6v8M1 13h8" stroke="#666" stroke-dasharray="2 1"/><path d="M9 9h6v5H9zM10 9V7h4v2" fill="#777" stroke="#555"/></svg></button>
                <svg><use href="#left"/></svg>
                <div class="hbar"><i class="thumb"></i><svg><use href="#right"/></svg></div>
                <svg class="grip"><use href="#grip"/></svg>
            </div>
        </section>
    </main>

    <footer class="status">
        <span class="hint">Zoom All to Fit</span>
        <svg viewBox="0 0 16 16"><path d="M5 3l3-2 3 2v4l4 2v6h-4v-4H9v5H6v-4H5v4H1V8l4-2z" fill="#aaa" stroke="#888"/><path d="M5 3l3 2 3-2M8 5v4M1 8l3 1v6" fill="none" stroke="#e4e4e4"/></svg>
        <label class="combo"><select aria-label="Active workset"><option></option></select><svg viewBox="0 0 16 16"><path d="M4.500 6L8 10l3.500-4" fill="none" stroke="#aaa"/></svg></label>
        <svg viewBox="0 0 16 16"><path d="M5 1h10l-3 5H8z" fill="#e4e4e4" stroke="#999"/><path d="M7 6h3v4l-3 1v4H2v-3l3-2z" fill="#aaa" stroke="#999"/></svg>
        <span>:0</span>
        <svg class="gap" viewBox="0 0 16 16"><rect width="16" height="16" rx="1" fill="#9c9c9c"/></svg>
        <svg viewBox="0 0 16 16"><path d="M3 0h13v16H6V9L3 6z" fill="#9c9c9c"/><path d="M0 9c0 4 3 4 8 4M6 10l3 3-3 3" fill="none" stroke="#e4e4e4" stroke-width="1.500"/></svg>
        <label class="combo"><select aria-label="Design option"><option>Main Model</option></select><svg viewBox="0 0 16 16"><path d="M4.500 6L8 10l3.500-4" fill="none" stroke="#aaa"/></svg></label>
        <div class="toggles">
            <svg viewBox="0 0 16 16"><path d="M1 3c2-3 5-2 7 0 2-2 5-3 7 0 1 3-1 5-4 5v5H7V8C3 9 0 6 1 3z" fill="#999"/><path d="M10 9v5l4 1" fill="none" stroke="#eee"/></svg>
            <svg viewBox="0 0 16 16"><path d="M1 13l2-7 9-5v5h3l-3 4v4H1z" fill="#999"/><path d="M12 8v7h3" fill="none" stroke="#eee"/></svg>
            <svg viewBox="0 0 16 16"><path d="M4 1h6v6l5 2v6h-4l-1-4H1l3-4z" fill="#999"/><path d="M12 10v5h3" fill="none" stroke="#eee"/></svg>
            <svg viewBox="0 0 16 16"><path d="M1 3l4 1 10-3-3 6 3 2v6H9l-7-1z" fill="#999"/><path d="M12 3v5l4 2" fill="none" stroke="#eee"/></svg>
            <svg viewBox="0 0 16 16"><path d="M5 0v10M0 5h10M9 6v8l2-2 2 3" fill="none" stroke="#999" stroke-width="1.500"/><path d="M6 6l8 8" stroke="#eee"/></svg>
            <svg viewBox="0 0 16 16"><circle cx="8" cy="8" r="5" fill="none" stroke="#999" stroke-width="3.500" stroke-dasharray="3 .5"/></svg>
            <svg viewBox="0 0 16 16"><path d="M1 2h14L10 8v7l-4-2V8z" fill="#c6d6e6" stroke="#444" stroke-width="1.300"/></svg>
            <span>:1</span>
        </div>
    </footer>
</div>

<div class="dialog" role="dialog" aria-labelledby="dialog-title">
    <div class="dialog-title">
        <svg class="app-icon" viewBox="0 0 14 12"><path d="M.5.500h13v11H.5z" fill="#fafafa" stroke="#aaa"/><path d="M1 2h6v8H1z" fill="#4d8f88"/><path d="M10 2h2v4h-2z" fill="#8fb0dd"/></svg>
        <span id="dialog-title">Edit Part</span>
        <button title="Close"><svg viewBox="0 0 16 16"><path d="M3 3l10 10M13 3L3 13" stroke="#333" stroke-width="1.200"/></svg></button>
    </div>
    <div class="dialog-body">
        <div class="preview">
            <div class="preview-row">
                <div class="preview-canvas">
                    <svg class="part" viewBox="44 168 394 472">
                        <g fill="none" stroke="#000" stroke-width="1.500">
                            <path d="M59.500 405l114.500 66v73L59.500 479zM66 415l101.500 59v58.500L66 474.500zM66 474.500L117 445M72 412.500L312 273.500M174 471L365 361M174 528.500L414 391.500"/>
                        </g>
                        <path d="M312 274l102 58v59l-102-59z" fill="#4b74cf" stroke="#1c4fc4"/>
                        <path d="M312 273.500l102 58V391" fill="none" stroke="#123"/>
                    </svg>
                    <svg class="cube" viewBox="26 0 60 68">
                        <ellipse cx="56" cy="54" rx="27" ry="15" fill="url(#cubeShadow)"/>
                        <path d="M28 17l28-14 28 14-28 15z" fill="#f4f4f4" stroke="#888"/>
                        <path d="M28 17l28 15v32L30 49zM84 17L56 32v32l26-15z" fill="#e6e6e6" stroke="#777"/>
                        <g class="faces"><text x="35" y="38" transform="rotate(20 35 38)">LEFT</text><text x="60" y="51" transform="rotate(-26 60 51)">FRONT</text><text x="51" y="22" transform="rotate(-26 51 22)">TOP</text></g>
                    </svg>
                    <svg class="nav"><use href="#navbar"/></svg>
                </div>
                <div class="vbar"><svg><use href="#up"/></svg><i class="thumb"></i><svg><use href="#down"/></svg></div>
            </div>
            <div class="hbar"><svg><use href="#left"/></svg><i class="thumb"></i><svg><use href="#right"/></svg></div>
        </div>
        <div class="settings">
            <div class="sheet-tabs"><button>Dimensions</button><button class="active">Connectors</button></div>
            <div class="sheet">
                <table>
                    <thead><tr><th class="c-id"></th><th>Value</th><th class="c-lock">Lock</th></tr></thead>
                    <tbody>
                        <tr><td class="id">C1</td><td class="picked">None</td><td class="lock"><input type="checkbox" aria-label="Lock C1" checked></td></tr>
                        <tr><td class="id">C2</td><td>Duct - Flg Connector: TDC</td><td class="lock"><input type="checkbox" aria-label="Lock C2"></td></tr>
                        <tr class="rest"><td></td><td></td><td></td></tr>
                    </tbody>
                </table>
            </div>
        </div>
    </div>
    <div class="dialog-foot">
        <a href="#">Learn how to specify fabrication part properties</a>
        <div class="buttons"><button class="ok">OK</button><button>Cancel</button><button disabled>Apply</button></div>
    </div>
    <svg class="grip"><use href="#grip"/></svg>
</div>

<div class="note note-left">
    <span>Top</span>
    <svg viewBox="0 0 84 58"><path d="M0 1l27 3-5 7 51 33a4.500 4.500 0 0 1-5 8L18 20l-5 6z" fill="#ff4343"/></svg>
</div>
<div class="note note-right">
    <span>Top</span>
    <svg viewBox="0 0 74 64"><path d="M0 0l26 6-5 7 46 37a4.500 4.500 0 0 1-6 8L15 19l-5 6z" fill="#ff4343"/></svg>
</div>
</body>
</html>
```
FILE: styles.css
```css
* {
    box-sizing: border-box;
}
body {
    margin: 0;
    font-family: "Open Sans", "Noto Sans", sans-serif;
    font-size: 12px;
    color: #333;
    overflow: hidden;
}
button {
    font: inherit;
    color: inherit;
    border: none;
    background: none;
    padding: 0;
    display: flex;
    align-items: center;
    justify-content: center;
}
svg {
    display: block;
    flex: none;
    width: 16px;
    height: 16px;
}
h2, h3 {
    margin: 0;
    font-size: 12px;
    font-weight: normal;
}
.defs {
    position: absolute;
    width: 0;
    height: 0;
}
.app {
    height: 100vh;
    display: flex;
    flex-direction: column;
    background: #ccc;
}
.caret {
    flex: none;
    width: 12px;
    display: flex;
    justify-content: center;
}
.caret::after {
    content: "";
    border: 3px solid transparent;
    border-top-color: #444;
    border-bottom: none;
}
.sep {
    width: 8px;
    height: 22px;
    background: linear-gradient(#bdbdbd, #bdbdbd) center / 1px 100% no-repeat;
}

/* title bar */
.titlebar {
    height: 30px;
    display: flex;
    padding-bottom: 4px;
}
.qat, .account {
    display: flex;
    align-items: center;
}
.qat {
    padding-left: 2px;
}
.qat button, .account button {
    width: 24px;
    height: 24px;
}
.qat .logo {
    height: 20px;
}
.qat .qat-ui {
    margin-right: 3px;
}
.qat .qat-more {
    width: 16px;
}
.title {
    flex: 1;
    text-align: center;
    line-height: 20px;
    white-space: nowrap;
}
.account .narrow {
    width: 16px;
}
.account .minimize {
    margin-left: 54px;
}

/* ribbon tabs */
.tabs {
    height: 20px;
    display: flex;
    align-items: center;
    white-space: nowrap;
}
.tabs a {
    padding: 0 8px;
    line-height: 20px;
    color: #333;
    text-decoration: none;
}
.tabs .file {
    width: 45px;
    padding: 0;
    margin: 0 2px 0 1px;
    text-align: center;
    color: #fff;
    background: #2a7ab5;
}
.tabs-more {
    width: 10px;
    height: 10px;
    margin: 0 9px 0 5px;
}
.tabs-state svg {
    height: 10px;
}

/* ribbon */
.ribbon {
    height: 96px;
    display: flex;
    background: #e4efd6;
    border-top: 1px solid #dbe6cd;
    color: #aaa;
}
.panel {
    background: #eee;
    border-right: 1px solid #e1ebd2;
    display: flex;
    flex-direction: column;
}
.panel-body {
    flex: 1;
    display: flex;
    padding-top: 1px;
}
.panel h2 {
    height: 18px;
    line-height: 18px;
    text-align: center;
    color: #444;
}
.panel.green h2 {
    background: #e4efd6;
}
.p-select { width: 58px; }
.p-props { width: 64px; }
.p-clip { width: 79px; }
.p-geom { width: 138px; }
.p-mod { width: 239px; }
.p-view { width: 65px; }
.p-meas { width: 56px; }
.p-create { width: 84px; }
.p-edit { width: 44px; border-left: 2px solid #dcebc2; }
.p-modify { width: 254px; }
.p-parts { width: 93px; }
.p-output { width: 205px; }
.p-select h2 {
    text-align: left;
    padding-left: 6px;
}
.modify-btn {
    width: 43px;
    height: 71px;
    margin: 1px 0 0 8px;
    padding-top: 3px;
    flex-direction: column;
    justify-content: flex-start;
    background: #c6dbef;
    border: 1px solid #5a9bd4;
    gap: 7px;
    white-space: nowrap;
}
.modify-btn svg {
    width: 20px;
    height: 26px;
}
.duo {
    flex-direction: column;
    align-items: center;
}
.duo button, .duo-grid button {
    height: 36px;
}
.duo svg, .duo-grid svg, .big svg {
    width: 32px;
    height: 32px;
}
.duo .props-btn {
    width: 38px;
    height: 34px;
    background: #c6dbef;
    border: 1px solid #5a9bd4;
}
.duo .props-btn svg {
    height: 30px;
}
.duo-grid {
    display: grid;
    grid-template-columns: repeat(auto-fill, 40px);
    grid-auto-rows: 36px;
    flex: 1;
}
.trio-grid {
    display: grid;
    grid-template-columns: repeat(3, 25px);
    grid-auto-rows: 25px;
    margin-right: 3px;
}
.trio button {
    width: 25px;
    height: 25px;
}
.trio.labelled button, .trio.with-caret button {
    width: auto;
    justify-content: flex-start;
}
.trio.labelled {
    width: 73px;
    padding-left: 6px;
}
.trio.labelled svg {
    margin-right: 5px;
}
.trio.labelled .caret {
    margin-left: 4px;
}
.trio.with-caret {
    padding-left: 7px;
    width: 37px;
}
.panel-body > .caret {
    align-items: center;
    padding-bottom: 2px;
}
.big {
    flex-direction: column;
    justify-content: flex-start;
    padding-top: 3px;
    line-height: 16px;
}
.big span {
    padding-top: 5px;
}
.p-clip .big {
    width: 51px;
}
.big .caret {
    padding-top: 3px;
}
.p-edit .big { width: 42px; }
.p-modify .panel-body {
    display: grid;
    grid-template-columns: 42px 85px 70px 56px;
}
.p-modify .big span {
    margin: 0 -4px;
}
.p-modify .big:not(:last-child) span {
    white-space: nowrap;
}
.p-parts .big { width: 46px; }
.p-output .big { width: 52px; }
.p-output .big:not(:first-child) { width: 68px; }
.p-output .caret {
    width: 8px;
    padding-top: 28px;
}
.job {
    font-size: 8px;
    font-weight: bold;
    fill: #f4f4f4;
}
.options {
    height: 27px;
    line-height: 25px;
    padding-left: 9px;
    background: #e4efd6;
    border-top: 2px solid #d9dfd2;
    color: #333;
}

/* scroll bars */
.vbar {
    width: 17px;
    background: #f0f0f0;
    display: flex;
    flex-direction: column;
    justify-content: space-between;
    align-items: center;
}
.hbar {
    height: 16px;
    background: #f0f0f0;
    display: flex;
    justify-content: space-between;
    align-items: center;
}
.thumb {
    width: 16px;
    height: 16px;
    background: #cdcdcd;
}

/* palettes */
.workspace {
    flex: 1;
    min-height: 0;
    display: flex;
}
.palette {
    width: 222px;
    padding: 0 1px 0 2px;
    background: #eee;
    border-right: 2px solid #ccc;
    display: flex;
    flex-direction: column;
    white-space: nowrap;
}
.palette h3 {
    height: 22px;
    line-height: 22px;
    padding-left: 1px;
    color: #555;
}
.type {
    height: 70px;
    border: 1px solid #d4d4d4;
    padding: 1px 2px;
}
.type svg {
    width: 66px;
    height: 66px;
}
.category {
    height: 23px;
    line-height: 21px;
    padding-left: 2px;
    border: 1px solid #b4b4b4;
    background: #ddd;
}
.props {
    list-style: none;
    margin: 0;
    padding: 0;
}
.props li {
    height: 19px;
    line-height: 18px;
    padding-left: 7px;
    background: #fff;
    border-bottom: 1px dotted #aaa;
}
.props .dim {
    color: #888;
}
.props li.group {
    height: 20px;
    background: #dcdcdc;
    padding-left: 1px;
}
.help {
    height: 27px;
    line-height: 18px;
    padding-left: 1px;
    color: #1a73d6;
    border-bottom: 1px solid #bbb;
}
.palette .browser-title {
    height: 19px;
    line-height: 19px;
}
.browser {
    flex: 1;
    min-height: 0;
    display: flex;
}
.browser .vbar {
    justify-content: flex-end;
}
.tree {
    flex: 1;
    min-width: 0;
    padding-top: 18px;
    line-height: 18px;
    overflow: hidden;
    color: #222;
    background: linear-gradient(90deg, transparent 7px, #ddd 7px, #ddd 9px, transparent 9px) #fff;
}
.branch {
    display: flex;
    padding-left: 23px;
    gap: 12px;
}
.views {
    height: 175px;
    background: linear-gradient(#ccc, #ccc) 28px 0 / 1px 100% no-repeat;
}
.box {
    width: 11px;
    height: 11px;
    margin-top: 4px;
}
.leaf {
    margin-left: 49px;
    padding-left: 18px;
    border-left: 1px dotted #aaa;
    background: linear-gradient(90deg, #ccc, #ccc) 0 50% / 15px 1px no-repeat;
}
.leaf b {
    background: #e2e2e2;
}
.palette > .hbar {
    height: 17px;
    margin-bottom: 2px;
    padding-right: 16px;
}
.palette > .hbar .thumb {
    width: 146px;
    margin-right: auto;
}

/* 3D view */
.view {
    flex: 1;
    min-width: 0;
    display: flex;
    flex-direction: column;
}
.view-tabs {
    height: 22px;
    display: flex;
    align-items: center;
    justify-content: flex-end;
}
.view-main {
    flex: 1;
    min-height: 0;
    display: flex;
}
.canvas {
    flex: 1;
    position: relative;
    background: #fff;
}
.model {
    position: absolute;
    right: 79px;
    top: 175px;
    width: 420px;
    height: 300px;
}
.canvas .cube {
    position: absolute;
    right: 19px;
    top: 40px;
    width: 110px;
    height: 92px;
}
.compass text {
    font-size: 18px;
    font-weight: bold;
    fill: #ececec;
    stroke: #aaa;
    stroke-width: 1px;
}
.compass .far {
    font-size: 10px;
}
.faces text {
    font-size: 8px;
    fill: #777;
}
.nav {
    position: absolute;
    width: 28px;
    height: 94px;
}
.canvas .nav {
    right: 1px;
    top: 138px;
}
.view-controls {
    height: 20px;
    padding-left: 11px;
    display: flex;
    align-items: center;
    background: #f0f0f0;
    border-bottom: 3px solid #ddd;
}
.view-controls button {
    width: 20px;
    height: 17px;
}
.view-controls .scale {
    width: 62px;
    font-size: 11px;
}
.view-controls .hbar {
    flex: 1;
}
.view-controls .thumb {
    margin-left: auto;
    margin-right: 448px;
}
.grip {
    width: 12px;
    height: 12px;
}
.view-controls .grip {
    margin: 4px 1px 0 5px;
}

/* status bar */
.status {
    height: 25px;
    padding-left: 2px;
    display: flex;
    align-items: center;
    gap: 6px;
}
.status .hint {
    width: 543px;
}
.status .gap {
    margin-left: 12px;
}
.combo {
    display: grid;
    width: 204px;
    align-items: center;
    justify-items: end;
}
.combo > * {
    grid-area: 1 / 1;
}
.combo select {
    width: 100%;
    height: 19px;
    appearance: none;
    border: 1px solid #e4e4e4;
    border-radius: 0;
    background: #fff;
    font: inherit;
    line-height: 16px;
    color: #888;
    padding: 0 1px;
}
.toggles {
    flex: 1;
    display: flex;
    justify-content: flex-end;
    gap: 8px;
    padding-right: 62px;
}
.toggles span {
    margin-left: -8px;
}

/* edit part dialog */
.dialog {
    position: absolute;
    left: 34px;
    top: 125px;
    width: 775px;
    height: 577px;
    display: flex;
    flex-direction: column;
    background: #f0f0f0;
    border: 1px solid #888;
    box-shadow: 0 4px 14px rgba(0, 0, 0, .4);
    color: #222;
}
.dialog-title {
    height: 29px;
    display: flex;
    align-items: center;
    padding: 0 9px 0 7px;
    gap: 6px;
    background: #fff;
}
.app-icon {
    width: 14px;
    height: 12px;
}
.dialog-title button {
    margin-left: auto;
}
.dialog-body {
    flex: 1;
    min-height: 0;
    display: flex;
    gap: 14px;
    padding: 10px 12px 0 8px;
}
.preview {
    width: 413px;
    height: 490px;
    margin-top: 2px;
    display: flex;
    flex-direction: column;
    border: 1px solid #fff;
    border-top-color: #777;
    border-left-color: #777;
}
.preview-row {
    flex: 1;
    min-height: 0;
    display: flex;
}
.preview-canvas {
    flex: 1;
    position: relative;
    background: #fff;
}
.part {
    width: 394px;
    height: 472px;
}
.preview .cube {
    position: absolute;
    right: 11px;
    top: 9px;
    width: 36px;
    height: 41px;
}
.preview .nav {
    right: 2px;
    top: 56px;
}
.preview .vbar {
    align-items: flex-start;
    padding-bottom: 2px;
}
.preview .hbar {
    padding-right: 19px;
}
.settings {
    flex: 1;
    display: flex;
    flex-direction: column;
}
.sheet-tabs {
    display: flex;
    align-items: flex-end;
}
.sheet-tabs button {
    width: 61px;
    height: 17px;
    border: 1px solid #ddd;
    border-bottom: none;
    font-size: 10px;
}
.sheet-tabs .active {
    width: 64px;
    height: 19px;
    background: #fff;
}
.sheet {
    height: 471px;
    padding: 13px 13px 14px 11px;
    border: 1px solid #fff;
    box-shadow: 0 0 0 1px #e2e2e2;
}
table {
    width: 100%;
    height: 100%;
    border-collapse: collapse;
    table-layout: fixed;
    background: #fff;
    font-size: 12px;
    border-top: 2px solid #777;
    border-left: 2px solid #777;
}
th {
    height: 22px;
    padding: 0;
    font-weight: normal;
    background: #f0f0f0;
    border: 1px solid #555;
}
.c-id {
    width: 29px;
}
.c-lock {
    width: 61px;
}
td {
    height: 19px;
    padding: 0 2px;
    line-height: 16px;
    border: 1px dotted #999;
}
td.id, td.lock {
    text-align: center;
}
td.picked {
    background: #ff9494;
    border: 1px solid #222;
}
.rest td {
    height: auto;
}
td input {
    appearance: none;
    display: block;
    width: 13px;
    height: 13px;
    margin: 0 auto;
    border: 1px solid #444;
    background: #fff;
}
td input:checked::after {
    content: "";
    display: block;
    width: 9px;
    height: 5px;
    margin: 2px 1px;
    border-left: 1px solid #333;
    border-bottom: 1px solid #333;
    transform: rotate(-45deg);
}
.dialog-foot {
    height: 45px;
    padding: 0 9px 0 8px;
    display: flex;
    justify-content: space-between;
    font-size: 10px;
}
.dialog-foot a {
    margin-top: 11px;
    color: #1a73d6;
}
.buttons {
    display: flex;
    gap: 9px;
    padding-top: 13px;
}
.buttons button {
    width: 82px;
    height: 23px;
    background: #e1e1e1;
    border: 1px solid #adadad;
    font-size: 11px;
}
.buttons .ok {
    border: 2px solid #0078d7;
}
.buttons button:disabled {
    background: #ccc;
    border-color: #c2c2c2;
    color: #8a8a8a;
}
.dialog > .grip {
    position: absolute;
    right: 1px;
    bottom: 1px;
}

/* red call-outs */
.note {
    position: absolute;
    color: #ff4343;
    font-family: "Noto Sans", "Open Sans", sans-serif;
    font-size: 24px;
    font-weight: bold;
    line-height: 30px;
    text-shadow: 2px 3px 3px rgba(0, 0, 0, .4);
}
.note svg {
    filter: drop-shadow(3px 4px 2px rgba(0, 0, 0, .45));
}
.note-left {
    left: 317px;
    top: 100px;
}
.note-left span {
    margin-left: 57px;
}
.note-left svg {
    width: 84px;
    height: 58px;
    margin-top: -8px;
}
.note-right {
    right: 84px;
    top: 156px;
}
.note-right span {
    margin-left: 41px;
}
.note-right svg {
    width: 74px;
    height: 64px;
    margin-top: -10px;
}
```
